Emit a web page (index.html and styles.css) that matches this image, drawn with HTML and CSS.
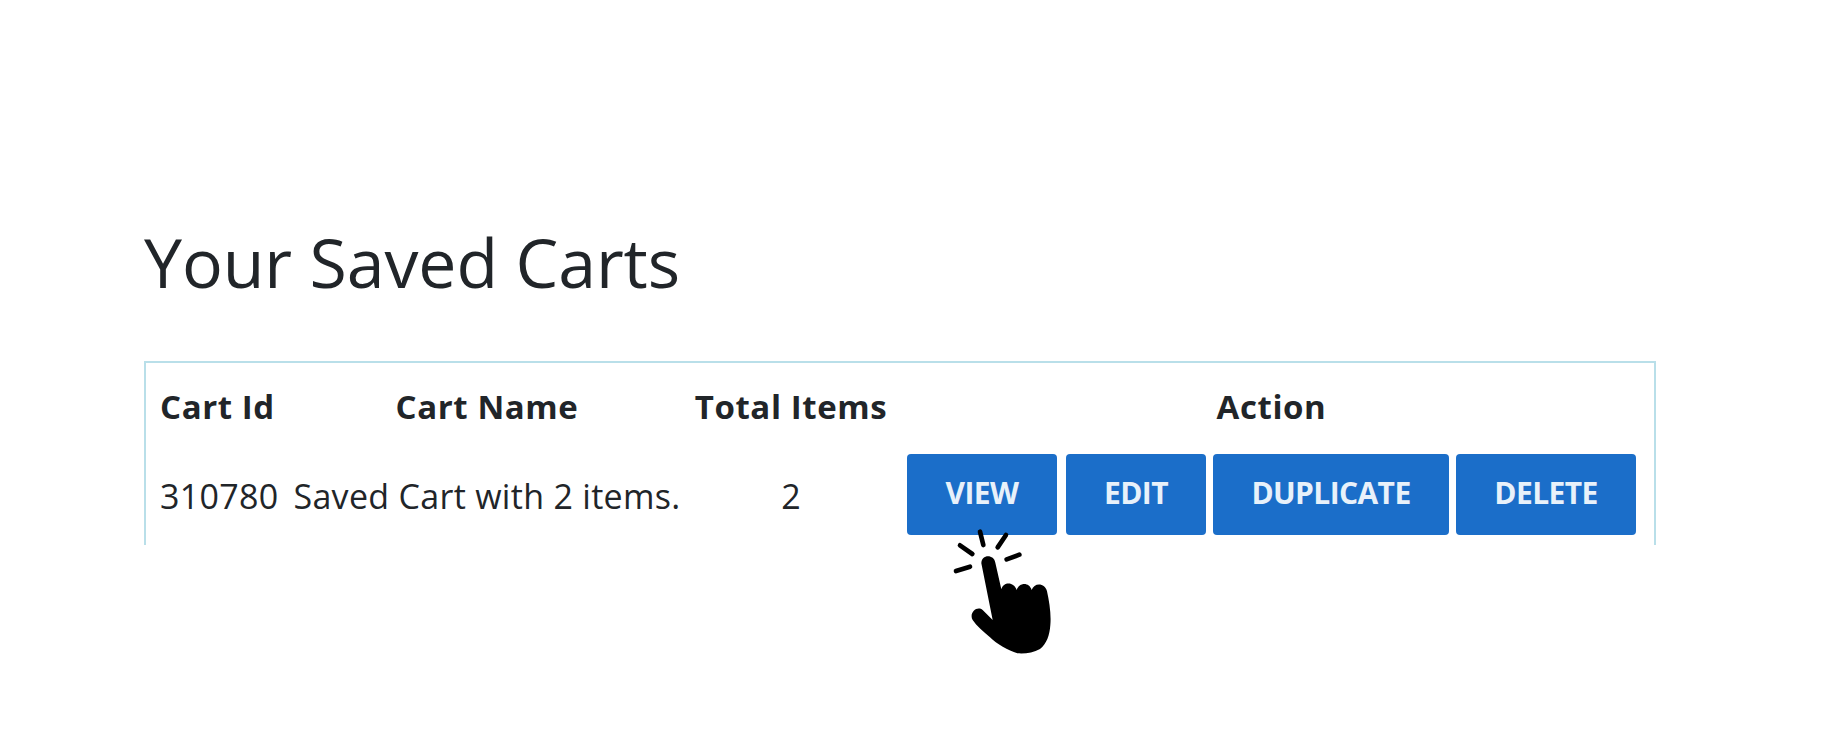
FILE: index.html
```html
<!DOCTYPE html>
<html lang="en">
<head>
    <meta charset="UTF-8">
    <title>Your Saved Carts</title>
    <link rel="stylesheet" href="styles.css">
</head>

<body>
    <div class="page">
        <h1>Your Saved Carts</h1>
        <div class="cart-box">
            <table class="cart-table">
                <tr>
                    <th class="col-id">Cart Id</th>
                    <th class="col-name">Cart Name</th>
                    <th class="col-total">Total Items</th>
                    <th class="col-action">Action</th>
                </tr>
                <tr>
                    <td class="col-id">310780</td>
                    <td class="col-name">Saved Cart with 2 items.</td>
                    <td class="col-total">2</td>
                    <td class="col-action">
                        <div class="actions">
                            <button class="btn btn-view">VIEW</button>
                            <button class="btn btn-edit">EDIT</button>
                            <button class="btn btn-duplicate">DUPLICATE</button>
                            <button class="btn btn-delete">DELETE</button>
                        </div>
                    </td>
                </tr>
            </table>
        </div>
    </div>

    <svg class="hand" viewBox="0 0 420 420" width="140" height="140">
        <path d="M154 130 C154 102 192 102 196 128 L214 208 C220 184 252 184 260 210 C268 186 298 186 305 210 C312 186 346 188 351 214 C358 245 364 285 361 315 C359 345 350 372 330 387 C310 398 285 402 262 400 C235 392 200 372 180 352 C160 335 140 318 128 300 C116 280 140 256 158 270 L188 300 Z" fill="#000"/>
        <g class="rays">
            <path d="M150 35 L160 75"/>
            <path d="M228 45 L203 82"/>
            <path d="M90 76 L127 102"/>
            <path d="M268 104 L230 118"/>
            <path d="M78 153 L120 140"/>
        </g>
    </svg>
</body>

</html>
```
FILE: styles.css
```css
body {
    font-family: "Open Sans", "Noto Sans", sans-serif;
    background-color: #fff;
    color: #212529;
    margin: 0;
    height: 736px;
    overflow: hidden;
    position: relative;
}

.page {
    padding: 217px 0 0 144px;
}

h1 {
    font-size: 68px;
    font-weight: 400;
    line-height: 90px;
    letter-spacing: -0.1px;
    margin: 0 0 54px;
}

.cart-box {
    width: 1512px;
    height: 184px;
    box-sizing: border-box;
    border: 2px solid #b9dfe9;
    border-bottom: none;
    overflow: hidden;
}

.cart-table {
    border-collapse: collapse;
    table-layout: fixed;
    width: 1508px;
}

th {
    font-size: 33px;
    height: 87px;
    padding: 0;
    letter-spacing: 0.6px;
    text-align: center;
}

td {
    font-size: 34px;
    height: 84px;
    padding: 4px 0 0;
    letter-spacing: 0.3px;
    text-align: center;
}

.col-id {
    width: 143px;
    text-align: left;
    padding-left: 14px;
    box-sizing: border-box;
}

.col-name {
    width: 396px;
    white-space: nowrap;
}

.col-total {
    width: 212px;
}

th.col-action {
    padding-right: 8px;
}

td.col-action {
    padding-top: 0;
}

.actions {
    display: flex;
    gap: 7px;
    padding-left: 10px;
}

.btn {
    font-family: "Open Sans", "Noto Sans", sans-serif;
    font-size: 30px;
    font-weight: 700;
    letter-spacing: -0.6px;
    height: 81px;
    background-color: #1b6ec9;
    color: #e8f1fa;
    border: none;
    border-radius: 4px;
    padding: 0 0 4px;
}

.btn-view { width: 150px; margin-right: 2px; }
.btn-edit { width: 140px; }
.btn-duplicate { width: 236px; }
.btn-delete { width: 180px; }

.hand {
    position: absolute;
    left: 930px;
    top: 520px;
}

.rays path {
    stroke: #000;
    stroke-width: 14;
    stroke-linecap: round;
    fill: none;
}
```
